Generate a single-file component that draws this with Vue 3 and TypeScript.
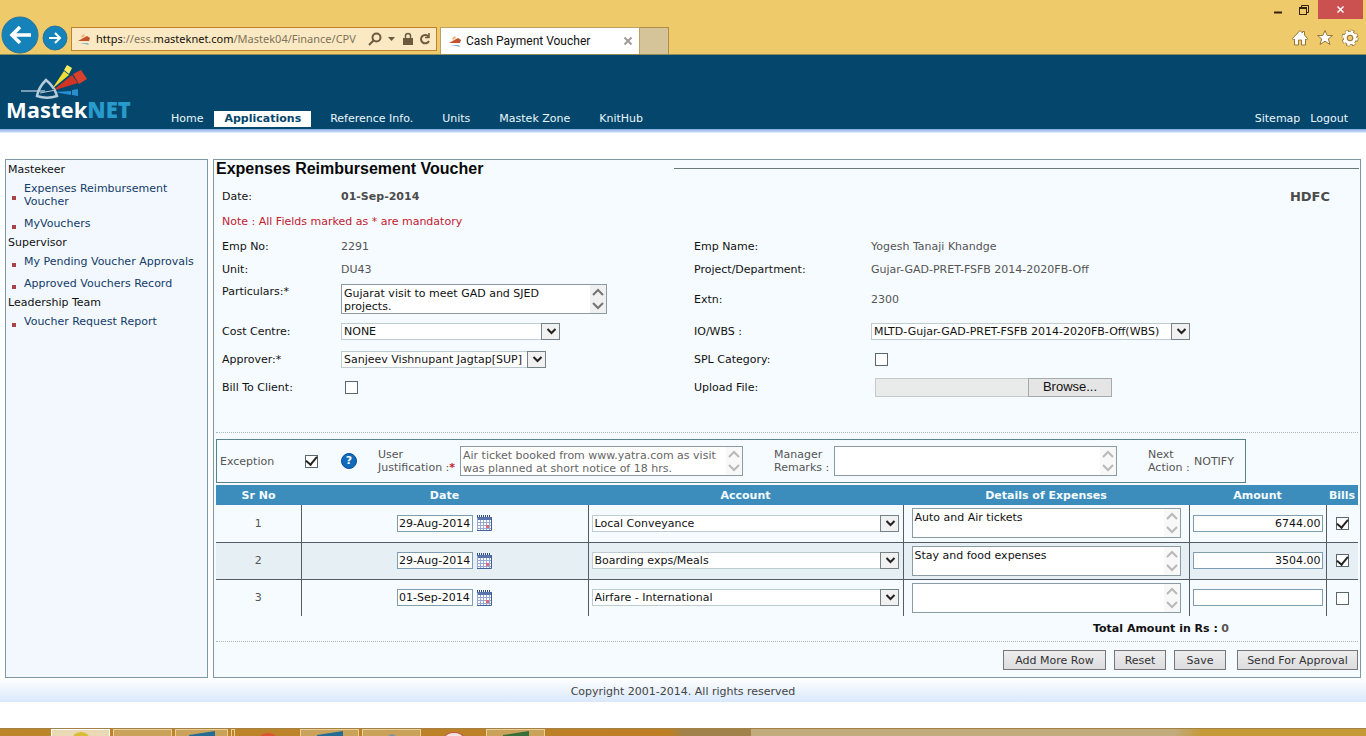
<script setup lang="ts">
import { ref } from 'vue'

interface MenuGroup { title: string; links: string[] }
interface Expense { date: string; account: string; details: string; amount: string; bill: boolean }

const nav = ['Home', 'Applications', 'Reference Info.', 'Units', 'Mastek Zone', 'KnitHub']
const menu: MenuGroup[] = [
  { title: 'Mastekeer', links: ['Expenses Reimbursement Voucher', 'MyVouchers'] },
  { title: 'Supervisor', links: ['My Pending Voucher Approvals', 'Approved Vouchers Record'] },
  { title: 'Leadership Team', links: ['Voucher Request Report'] },
]
const rows = ref<Expense[]>([
  { date: '29-Aug-2014', account: 'Local Conveyance', details: 'Auto and Air tickets', amount: '6744.00', bill: true },
  { date: '29-Aug-2014', account: 'Boarding exps/Meals', details: 'Stay and food expenses', amount: '3504.00', bill: true },
  { date: '01-Sep-2014', account: 'Airfare - International', details: '', amount: '', bill: false },
])
const particulars = ref('Gujarat visit to meet GAD and SJED projects.')
const justification = ref('Air ticket booked from www.yatra.com as visit was planned at short notice of 18 hrs.')
const remarks = ref('')
const exception = ref(true)
const billClient = ref(false)
const splCategory = ref(false)
const tasks = ['active', 'plain', 'blue short', 'gap', 'none red', 'blue', 'grey', 'none white', 'green']
</script>

<template>
  <div class="screen">
    <header class="browser">
      <div class="window-buttons">
        <button class="win" aria-label="Minimize"><svg width="10" height="10"><path d="M1 7.500h8" stroke="#33230c" stroke-width="2" /></svg></button>
        <button class="win" aria-label="Restore"><svg width="12" height="12" fill="none" stroke="#33230c"><path d="M3.500 3V1.500h7v7H9" /><rect x="1.500" y="3.500" width="7" height="7" /><path d="M1 4.500h8" /></svg></button>
        <button class="win close" aria-label="Close"><svg width="10" height="10"><path d="M1.500 1.500l6 6m0-6l-6 6" stroke="#fff" stroke-width="1.500" /></svg></button>
      </div>
      <div class="toolbar">
        <button class="round back" aria-label="Back"><svg width="38" height="38"><circle cx="19" cy="19" r="18" fill="#1583ba" stroke="#27749a" /><path d="M30 19H12M19 11l-8 8 8 8" fill="none" stroke="#fff" stroke-width="3.500" /></svg></button>
        <button class="round" aria-label="Forward"><svg width="26" height="26"><circle cx="13" cy="13" r="12" fill="#1583ba" stroke="#27749a" /><path d="M7 13h11M13 8l5 5-5 5" fill="none" stroke="#fff" stroke-width="2" /></svg></button>
        <div class="address">
          <svg width="14" height="14"><path d="M1 9l9-5 3 2-1 3z" fill="#c3522d" /><path d="M4 4l3-2 1 2-3 2z" fill="#f3b779" /><path d="M3 11h8l1 2z" fill="#8db4cc" /></svg>
          <div class="url"><span class="dark">https</span>://ess.<span class="dark">masteknet.com</span>/Mastek04/Finance/CPV</div>
          <svg width="14" height="14" fill="none" stroke="#6d5a3c" stroke-width="2"><circle cx="8.500" cy="5.500" r="4" /><path d="M5.500 8.500L1 13" /></svg>
          <svg width="8" height="14"><path d="M1 5h7L4.500 9z" fill="#6d5a3c" /></svg>
          <svg class="lock" width="12" height="14"><path d="M1 6h10v7H1z" fill="#6d5a3c" /><path d="M3.500 7V4a2.500 2.500 0 0 1 5 0v3" fill="none" stroke="#6d5a3c" stroke-width="1.500" /></svg>
          <svg width="12" height="14" fill="none" stroke="#6d5a3c" stroke-width="2"><path d="M9.500 4.500A4.200 4.200 0 1 0 10 9" /><path d="M10 1v4.500H6" stroke-width="1.500" /></svg>
        </div>
        <div class="tab">
          <svg width="14" height="14"><path d="M1 9l9-5 3 2-1 3z" fill="#c3522d" /><path d="M4 4l3-2 1 2-3 2z" fill="#f3b779" /><path d="M3 11h8l1 2z" fill="#8db4cc" /></svg>
          <span>Cash Payment Voucher</span>
          <button aria-label="Close tab"><svg width="10" height="10"><path d="M1.500 1.500l7 7m0-7l-7 7" stroke="#a09d98" stroke-width="2" /></svg></button>
        </div>
        <button class="new-tab" aria-label="New tab"></button>
        <div class="tools">
          <button aria-label="Home page"><svg width="18" height="18" fill="#fff" stroke="#97763a"><path d="M1.500 9.500L9 1.500l2.500 2.500V2.500h2v3.500l3 3.500-1 1.500-1-1v6h-4v-5h-3v5h-4v-6l-1 1z" /></svg></button>
          <button aria-label="Favorites"><svg width="18" height="18" fill="#fff" stroke="#97763a"><path d="M9 1.500l2.200 5h5.300l-4.200 3.400 1.700 5.600L9 12.200l-5 3.300 1.700-5.600L1.500 6.500h5.300z" /></svg></button>
          <button aria-label="Tools"><svg width="18" height="18"><g fill="none" stroke="#97763a"><circle cx="9" cy="9" r="6.500" stroke-width="4" stroke-dasharray="3.100 2" /><circle cx="9" cy="9" r="5" stroke-width="4" /></g><g fill="none" stroke="#fff"><circle cx="9" cy="9" r="6.300" stroke-width="3" stroke-dasharray="2.300 2.650" /><circle cx="9" cy="9" r="4.800" stroke-width="3" /></g><circle cx="9" cy="9" r="2.700" fill="#efca6d" stroke="#97763a" /></svg></button>
        </div>
      </div>
    </header>

    <div class="site-head">
      <a href="#" class="logo" aria-label="MastekNET">
        <svg width="128" height="56" viewBox="0 0 128 56">
          <path d="M15 26h24" stroke="#9eb9cd" stroke-width="1.500" />
          <path d="M46 24L58 6l5 4z" fill="#ecdf37" /><path d="M58 5l3-5 5 3-3 6z" fill="#f5ec62" />
          <path d="M46 26l20-16 6 8z" fill="#cf3424" /><path d="M67 9l8-4 6 9-8 5z" fill="#d9412c" />
          <path d="M48 27l17-1v4z" fill="#298fd0" /><path d="M66 25l6-1v7l-6-1z" fill="#298fd0" />
          <path d="M40 15c-5 5-8 10-9 16 6 2 14 2 20 0-2-7-6-12-11-16z" fill="none" stroke="#b5cbda" stroke-width="2.500" />
          <path d="M34 29l14-5-2 5z" fill="#073d60" /><path d="M34 28l16-3" stroke="#b5cbda" />
        </svg>
        <span class="wordmark">Mastek<b>NET</b></span>
      </a>
      <nav>
        <a v-for="item in nav" :key="item" href="#" :class="{ current: item === 'Applications' }">{{ item }}</a>
      </nav>
      <div class="session"><a href="#">Sitemap</a><a href="#">Logout</a></div>
    </div>
    <div class="rule"></div>

    <div class="body">
      <aside>
        <section v-for="group in menu" :key="group.title">
          <h2>{{ group.title }}</h2>
          <ul><li v-for="link in group.links" :key="link"><a href="#">{{ link }}</a></li></ul>
        </section>
      </aside>

      <main>
        <div class="title"><h1>Expenses Reimbursement Voucher</h1><i></i></div>
        <div class="form">
          <div class="line l-date"><span>Date:</span><strong>01-Sep-2014</strong><strong class="bank">HDFC</strong></div>
          <p class="note">Note : All Fields marked as * are mandatory</p>
          <div class="line"><span>Emp No:</span><em>2291</em><span>Emp Name:</span><em>Yogesh Tanaji Khandge</em></div>
          <div class="line"><span>Unit:</span><em>DU43</em><span>Project/Department:</span><em>Gujar-GAD-PRET-FSFB 2014-2020FB-Off</em></div>
          <div class="line tall">
            <label for="particulars" class="up">Particulars:*</label>
            <div class="area wide dark"><textarea id="particulars" v-model="particulars"></textarea><svg width="16" height="28" class="arrows"><path d="M3 10l5-5 5 5M3 18l5 5 5-5" /></svg></div>
            <span>Extn:</span><em>2300</em>
          </div>
          <div class="line pick">
            <label for="cost">Cost Centre:</label>
            <div class="select cost"><select id="cost"><option>NONE</option></select><svg width="19" height="15"><path d="M5.500 5l4 4 4-4" /></svg></div>
            <label for="io">IO/WBS :</label>
            <div class="select io"><select id="io"><option>MLTD-Gujar-GAD-PRET-FSFB 2014-2020FB-Off(WBS)</option></select><svg width="19" height="15"><path d="M5.500 5l4 4 4-4" /></svg></div>
          </div>
          <div class="line pick">
            <label for="approver">Approver:*</label>
            <div class="select approver"><select id="approver"><option>Sanjeev Vishnupant Jagtap[SUP]</option></select><svg width="19" height="15"><path d="M5.500 5l4 4 4-4" /></svg></div>
            <label for="spl">SPL Category:</label>
            <input id="spl" v-model="splCategory" class="indent" type="checkbox">
          </div>
          <div class="line pick">
            <label for="bill">Bill To Client:</label>
            <input id="bill" v-model="billClient" class="indent" type="checkbox">
            <label for="upload">Upload File:</label>
            <div class="upload"><input id="upload" type="text" readonly><button>Browse...</button></div>
          </div>
        </div>

        <div class="exception">
          <label for="exc" class="exc">Exception</label>
          <input id="exc" v-model="exception" type="checkbox">
          <button class="help" aria-label="Help">?</button>
          <label for="just" class="just">User<br>Justification :<b>*</b></label>
          <div class="area big muted"><textarea id="just" v-model="justification"></textarea><svg width="16" height="28" class="arrows"><path d="M3 10l5-5 5 5M3 18l5 5 5-5" /></svg></div>
          <label for="remarks" class="remarks">Manager<br>Remarks :</label>
          <div class="area big"><textarea id="remarks" v-model="remarks"></textarea><svg width="16" height="28" class="arrows"><path d="M3 10l5-5 5 5M3 18l5 5 5-5" /></svg></div>
          <span class="next">Next<br>Action :</span><span class="notify">NOTIFY</span>
        </div>

        <table>
          <colgroup><col class="c1"><col class="c2"><col class="c3"><col class="c4"><col class="c5"><col class="c6"></colgroup>
          <thead><tr><th>Sr No</th><th>Date</th><th>Account</th><th>Details of Expenses</th><th>Amount</th><th>Bills</th></tr></thead>
          <tbody>
            <tr v-for="(row, i) in rows" :key="i">
              <td class="center">{{ i + 1 }}</td>
              <td><div class="date"><input v-model="row.date" type="text" aria-label="Date"><button aria-label="Pick date"><svg width="16" height="16"><path d="M1 2h14v13H1z" fill="#fff" /><path d="M1 1h14" stroke="#314b79" stroke-width="2" stroke-dasharray="1 1" /><path d="M1 2h14v3H1z" fill="#5973ac" /><path d="M1.500 3v12M4.500 5v10M7.500 5v10M10.500 5v10M13.500 5v10M1 7.500h14M1 10.500h14M1 13.500h14" stroke="#97a9d2" /><path d="M15.500 2v13.500H1" fill="none" stroke="#405f9d" /><path d="M10 10h3v3h-3z" fill="#e06a72" /></svg></button></div></td>
              <td><div class="select account"><select v-model="row.account" aria-label="Account"><option>{{ row.account }}</option></select><svg width="19" height="15"><path d="M5.500 5l4 4 4-4" /></svg></div></td>
              <td><div class="area detail"><textarea v-model="row.details" aria-label="Details of expense"></textarea><svg width="16" height="28" class="arrows"><path d="M3 10l5-5 5 5M3 18l5 5 5-5" /></svg></div></td>
              <td><input v-model="row.amount" class="amount" type="text" aria-label="Amount"></td>
              <td class="center"><input v-model="row.bill" type="checkbox" aria-label="Bill attached"></td>
            </tr>
          </tbody>
        </table>
        <div class="total"><b>Total Amount in Rs :</b> <strong>0</strong></div>
        <div class="actions"><button class="add">Add More Row</button><button>Reset</button><button class="save">Save</button><button class="send">Send For Approval</button></div>
      </main>
    </div>

    <footer>Copyright 2001-2014. All rights reserved</footer>
    <div class="taskbar"><div v-for="(task, i) in tasks" :key="i" class="task" :class="task"><i></i></div></div>
  </div>
</template>

<style>
body { background: #fff; }
</style>

<style scoped>
* { box-sizing: border-box; }
.screen { min-height: 100vh; display: flex; flex-direction: column; overflow: hidden; font: 11px/13px "DejaVu Sans", Verdana, sans-serif; color: #111; }
button { font: inherit; color: inherit; border: 0; padding: 0; background: none; }
svg { display: block; flex: none; }
a { text-decoration: none; color: inherit; }
em { font-style: normal; }
.browser { background: #efca6b; border-bottom: 1px solid #8e8c56; }
.window-buttons { display: flex; justify-content: flex-end; height: 19px; padding-right: 3px; }
.win { width: 26px; display: flex; align-items: center; justify-content: center; }
.win.close { width: 45px; background: #ca5150; margin-left: 1px; }
.toolbar { display: flex; align-items: flex-end; height: 35px; font: 12px/16px Roboto, "Open Sans", sans-serif; padding-left: 1px; }
.back { margin-right: 3px; }
.round:nth-child(2) { padding-bottom: 3px; }
.address { width: 366px; height: 24px; margin: 0 3px 3px 3px; padding: 0 5px; display: flex; align-items: center; border: 1px solid #bf812e; background: #fbe9c4; color: #817359; gap: 5px; }
.url { flex: 1; white-space: nowrap; font: 11px/16px "Noto Sans", "Open Sans", sans-serif; }
.dark { color: #15110a; }
.lock { margin-left: 2px; }
.tab { width: 200px; height: 27px; padding: 0 6px 0 7px; display: flex; align-items: center; gap: 4px; background: #fff; border: 1px solid #bba060; border-bottom: 0; }
.tab span { flex: 1; }
.new-tab { width: 29px; height: 27px; background: #d5c499; border: 1px solid #b08c49; border-bottom: 0; border-left: 0; }
.tools { margin-left: auto; display: flex; gap: 7px; padding: 0 7px 7px 0; }
.site-head { display: flex; align-items: flex-end; height: 74px; background: #04466c; color: #eaf7fb; }
.logo { width: 161px; height: 64px; position: relative; padding-left: 6px; }
.wordmark { position: absolute; left: 6px; top: 30px; font: 700 22px/28px "Noto Sans", "Open Sans", sans-serif; color: #fff; }
.wordmark b { color: #289acb; }
nav { display: flex; gap: 9px; }
nav a { padding: 0 10px; line-height: 16px; margin-bottom: 2px; }
nav a.current { background: #fff; color: #04466c; font-weight: 700; margin-left: -8px; }
.session { margin: 0 18px 2px auto; display: flex; gap: 10px; line-height: 16px; }
.rule { height: 4px; background: linear-gradient(#85a9e3, #b9cff3 60%, #eff5ff); }
.body { display: flex; gap: 5px; padding: 26px 5px 0; align-items: stretch; }
aside { width: 203px; flex: none; padding: 2px; border: 1px solid #7e99a5; background: #f2f8fe; }
aside h2 { font: inherit; margin: 0; line-height: 15px; }
ul { list-style: none; margin: 0; padding: 1px 0 0; }
li { display: flex; gap: 8px; padding: 4px 8px 5px 4px; color: #123b68; }
li::before { content: ''; width: 4px; height: 4px; flex: none; margin-top: 6px; align-self: center; background: #a74448; }
main { flex: 1; min-width: 0; min-height: 519px; border: 1px solid #8098a1; background: #f6fbff; padding: 0 2px; }
.title { display: flex; }
h1 { margin: 0; font: 700 16px/18px "Liberation Sans", Arial, sans-serif; width: 458px; color: #080808; }
.title i { flex: 1; border-top: 1px solid #69787c; margin-top: 8px; margin-right: -1px; }
.form { padding: 7px 0 31px 6px; border-bottom: 1px dotted #aab7bb; }
.line { display: grid; grid-template-columns: 119px 353px 177px 1fr; align-items: center; min-height: 23px; }
.l-date strong { color: #4b4b4b; }
.l-date .bank { grid-column: 4; justify-self: end; margin-right: 28px; font-size: 13px; }
.note { margin: 0; color: #c3202f; line-height: 27px; }
.line em { color: #555; }
.line.tall { min-height: 36px; }
.tall .up { align-self: start; padding-top: 4px; }
.line.pick { min-height: 28px; }
.area { display: flex; height: 30px; background: #fff; border: 1px solid #8a9ba3; color: #111; }
.area textarea { flex: 1; width: 0; border: 0; margin: 0; padding: 2px; resize: none; background: none; overflow: hidden; color: inherit; font: inherit; outline: 0; }
.arrows { background: #f8f8f8; fill: none; stroke: #b9b9b9; stroke-width: 2; }
.area.dark .arrows { stroke: #757575; background: #f0f0f0; }
.area.wide { width: 266px; }
.area.big { width: 283px; flex: none; }
.area.detail { width: auto; margin: 0 8px; }
.area.muted { color: #666; }
.select { display: flex; height: 17px; position: relative; border: 1px solid #bdcdd3; background: #fff; }
.select select { appearance: none; width: 100%; border: 0; padding: 0 20px 0 2px; background: none; font: inherit; color: #111; outline: 0; }
.select svg { position: absolute; right: -1px; top: -1px; width: 19px; height: 17px; border: 1px solid #75828a; background: #f1f1f1; fill: none; stroke: #222; stroke-width: 2; pointer-events: none; }
.cost { width: 219px; }
.approver { width: 205px; }
.io { width: 319px; }
.account { margin: 0 4px 0 3px; }
input[type="checkbox"] { appearance: none; width: 13px; height: 13px; margin: 0; background: #fff; border: 1px solid #59666e; flex: none; display: inline-grid; place-items: center; vertical-align: middle; }
input[type="checkbox"]:checked::after { content: ''; width: 5px; height: 9px; border: solid #222; border-width: 0 2px 2px 0; transform: rotate(40deg); margin-top: -3px; }
.indent { justify-self: start; margin-left: 4px !important; }
.upload { display: flex; height: 19px; margin-left: 4px; }
.upload input { width: 153px; border: 1px solid #c7c9c9; border-right: 0; background: #e9eaea; }
.upload button { width: 84px; border: 1px solid #a6aaad; background: #e5e5e5; font: 13px/16px "Liberation Sans", Arial, sans-serif; }
.exception { width: 1030px; max-width: 100%; height: 44px; margin-top: 6px; padding-left: 3px; display: flex; align-items: center; border: 1px solid #56838c; color: #555; }
.exc { width: 85px; }
.help { width: 16px; height: 16px; border-radius: 50%; background: #106bbb; border: 1px solid #084e98; color: #fff; font-weight: 700; line-height: 14px; margin: 0 21px 0 23px; }
.just { width: 82px; }
.just b { color: #c3202f; }
.remarks { width: 60px; margin-left: 31px; }
.next { width: 46px; margin-left: 31px; }
table { width: 100%; margin-top: 2px; border-collapse: collapse; table-layout: fixed; }
.c1 { width: 85px; } .c2 { width: 287px; } .c3 { width: 315px; } .c4 { width: 286px; } .c6 { width: 32px; }
th { background: #3d8dbc; color: #f4fbff; height: 20px; padding: 0; }
td { height: 37px; padding: 0; border-left: 1px solid #555c67; border-bottom: 1px solid #555c67; }
td:first-child { border-left: 0; }
tr:last-child td { border-bottom: 0; }
tbody tr:nth-child(even) { background: #e6eff3; }
.center { text-align: center; color: #555; }
.date { display: flex; justify-content: center; gap: 3px; align-items: center; }
.date input, .amount { height: 17px; border: 1px solid #7f9db0; background: #fff; padding: 0 1px; font: inherit; color: #111; }
.date input { width: 76px; }
.amount { display: block; width: calc(100% - 6px); margin: 0 3px; text-align: right; }
.total { padding: 6px 129px 6px 0; text-align: right; border-bottom: 1px dotted #aab7bb; }
.total strong { color: #555; }
.actions { display: flex; justify-content: flex-end; gap: 8px; padding-top: 8px; }
.actions button { height: 20px; border: 1px solid #777; background: linear-gradient(#eee, #dcdcdf); color: #333; width: 52px; }
.actions .add { width: 103px; }
.actions .send { width: 121px; margin-left: 3px; }
footer { height: 24px; line-height: 28px; text-align: center; background: linear-gradient(#fff, #d9e8fb); color: #444; }
.taskbar { margin-top: auto; height: 8px; padding: 0 0 0 51px; display: flex; gap: 3px; overflow: hidden; border-top: 1px solid #a38145; background: linear-gradient(90deg, #bd862a, #bd7f26 49%, #a1824a 50%, #a1824a 55%, #c2ab7c 55%, #c2ab7c 86%, #c49a38 88%); }
.task { width: 59px; height: 7px; background: #cba25a; border: 1px solid #e8cf99; border-bottom: 0; display: flex; justify-content: center; }
.task.active { background: #ead9b5; border-color: #fff; }
.task.none { background: none; border-color: transparent; }
.task.short { width: 53px; }
.task.gap { width: 4px; background: none; }
.task i { width: 26px; height: 12px; }
.task.active i { background: #d8bd35; border-radius: 50%; width: 16px; margin-top: 2px; }
.task.blue i { background: #246b96; transform: skewY(-9deg); margin-top: 3px; }
.task.green i { background: #37703b; transform: skewY(-9deg); margin-top: 3px; }
.task.red i { background: #dd5435; border-radius: 50%; width: 18px; margin-top: 3px; }
.task.grey i { background: #83919a; border-radius: 50%; width: 10px; margin-top: 4px; }
.task.white i { background: #f3e4df; border: 1px solid #bd5146; border-radius: 50%; width: 20px; margin-top: 2px; }
</style>
